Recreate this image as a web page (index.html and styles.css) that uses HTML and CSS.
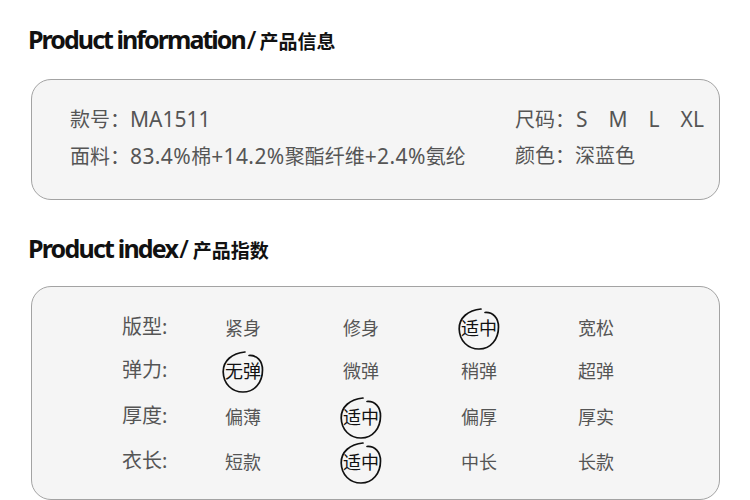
FILE: index.html
```html
<!DOCTYPE html>
<html lang="zh">
<head>
<meta charset="utf-8">
<title>Product information</title>
<link rel="stylesheet" href="styles.css">
</head>
<body>
<section class="block">
  <h2 class="title">Product information<span class="slash">/</span><span class="title-cn">产品信息</span></h2>
  <div class="panel info">
    <div class="info-col">
      <p class="info-row">款号：<span class="lat">MA1511</span></p>
      <p class="info-row">面料：<span class="lat pct">83.4%</span>棉<span class="lat pct">+14.2%</span>聚酯纤维<span class="lat pct">+2.4%</span>氨纶</p>
    </div>
    <div class="info-col info-side">
      <p class="info-row">尺码：<span class="sizes lat"><span>S</span><span>M</span><span>L</span><span>XL</span></span></p>
      <p class="info-row">颜色：深蓝色</p>
    </div>
  </div>
</section>
<section class="block block-second">
  <h2 class="title">Product index<span class="slash">/</span><span class="title-cn">产品指数</span></h2>
  <div class="panel index">
    <div class="index-row r1">
      <span class="label">版型:</span><span class="val">紧身</span><span class="val">修身</span>
      <span class="val on">适中<svg class="ring" viewBox="0 0 42 42"><path d="M23 1C10 2 1 10 1.2 21C1.5 33 10 41 21 41C33 41 40.5 31 40.5 19C40.5 10 35 4 27 4.5"/></svg></span>
      <span class="val">宽松</span>
    </div>
    <div class="index-row r2">
      <span class="label">弹力:</span>
      <span class="val on">无弹<svg class="ring" viewBox="0 0 42 42"><path d="M23 1C10 2 1 10 1.2 21C1.5 33 10 41 21 41C33 41 40.5 31 40.5 19C40.5 10 35 4 27 4.5"/></svg></span>
      <span class="val">微弹</span><span class="val">稍弹</span><span class="val">超弹</span>
    </div>
    <div class="index-row r3">
      <span class="label">厚度:</span><span class="val">偏薄</span>
      <span class="val on">适中<svg class="ring" viewBox="0 0 42 42"><path d="M23 1C10 2 1 10 1.2 21C1.5 33 10 41 21 41C33 41 40.5 31 40.5 19C40.5 10 35 4 27 4.5"/></svg></span>
      <span class="val">偏厚</span><span class="val">厚实</span>
    </div>
    <div class="index-row r4">
      <span class="label">衣长:</span><span class="val">短款</span>
      <span class="val on">适中<svg class="ring" viewBox="0 0 42 42"><path d="M23 1C10 2 1 10 1.2 21C1.5 33 10 41 21 41C33 41 40.5 31 40.5 19C40.5 10 35 4 27 4.5"/></svg></span>
      <span class="val">中长</span><span class="val">长款</span>
    </div>
  </div>
</section>
</body>
</html>
```
FILE: styles.css
```css
* { box-sizing: border-box; }
html, body { margin: 0; padding: 0; background: #fff; overflow: hidden; }
body {
  width: 750px;
  height: 500px;
  padding: 22px 30px 0 31px;
  font-family: "Noto Sans", "Noto Sans CJK SC", sans-serif;
  color: #555;
}
.block-second { margin-top: 31px; }
.block-second .title { margin-bottom: 18px; letter-spacing: -1.8px; }
.block-second .slash { margin-right: 4px; }
.title {
  margin: 0 0 20px -3px;
  font-size: 25px;
  line-height: 34px;
  font-weight: 700;
  letter-spacing: -1.95px;
  color: #111;
  white-space: nowrap;
}
.slash { letter-spacing: 0; margin-left: 2px; margin-right: 3px; font-weight: 500; }
.title-cn { font-size: 19px; letter-spacing: 0; }
.panel {
  background: #f5f5f5;
  border: 1px solid #a3a3a3;
  border-radius: 20px;
}
.info {
  height: 121px;
  display: flex;
  padding: 25px 0 0 38px;
}
.info-col { flex: none; width: 445px; }
.info-side { width: 200px; }
.info-row {
  margin: 0 0 8px;
  font-size: 20px;
  line-height: 28px;
  white-space: nowrap;
}
.lat { font-size: 21px; }
.pct { letter-spacing: .4px; }
.sizes { display: inline-flex; gap: 21px; margin-left: 1px; }
.index { height: 214px; padding: 24px 0 0 90px; }
.index-row {
  display: grid;
  grid-template-columns: 103px 118px 118px 117px 60px;
  align-items: center;
  height: 32px;
}
.r2 { margin-top: 11px; }
.r3 { margin-top: 14px; }
.r4 { margin-top: 13px; }
.label { font-size: 20px; line-height: 30px; }
.val {
  position: relative;
  justify-self: start;
  font-size: 18px;
  line-height: 26px;
  white-space: nowrap;
  margin-top: 2px;
}
.on { color: #111; }
.ring {
  position: absolute;
  left: -3px;
  top: -7px;
  width: 42px;
  height: 42px;
  fill: none;
  stroke: #111;
  stroke-width: 1.7;
  stroke-linecap: round;
}
```
